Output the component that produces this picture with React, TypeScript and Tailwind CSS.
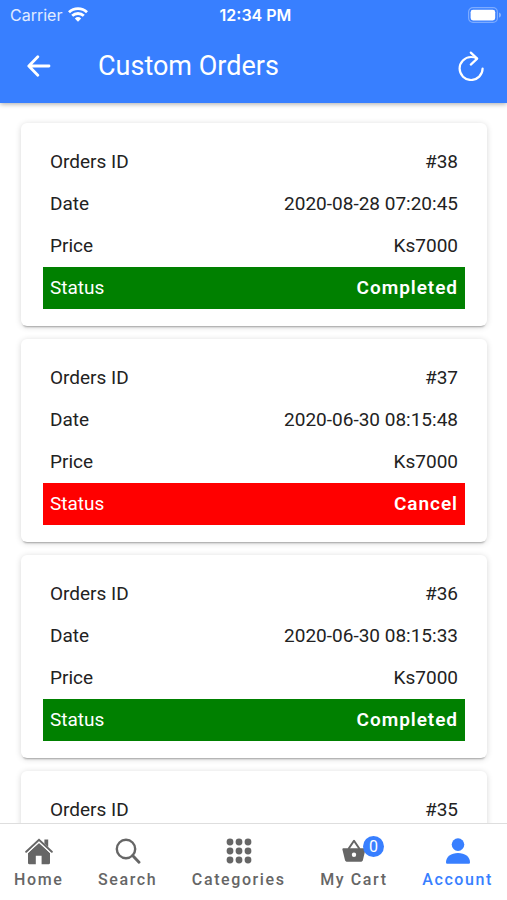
import type { ReactNode } from 'react';
import clsx from 'clsx';

type Order = {
  id: string;
  date?: string;
  price?: string;
  status?: 'Completed' | 'Cancel';
};

const orders: Order[] = [
  { id: '#38', date: '2020-08-28 07:20:45', price: 'Ks7000', status: 'Completed' },
  { id: '#37', date: '2020-06-30 08:15:48', price: 'Ks7000', status: 'Cancel' },
  { id: '#36', date: '2020-06-30 08:15:33', price: 'Ks7000', status: 'Completed' },
  { id: '#35' },
];

const WifiIcon = () => (
  <svg viewBox="0 0 20 15" className="h-[15px] w-5" fill="none" stroke="currentColor" strokeWidth="2.8" aria-hidden="true">
    <path d="M1 5.2a13 13 0 0 1 18 0" />
    <path d="M4.2 8.8a8.4 8.4 0 0 1 11.6 0" />
    <path d="M10 14.8 6.8 11.6a4.7 4.7 0 0 1 6.4 0z" fill="currentColor" stroke="none" />
  </svg>
);

const BatteryIcon = () => (
  <svg viewBox="0 0 33 16" className="h-4 w-[33px]" fill="none" aria-hidden="true">
    <rect x="0.6" y="0.6" width="28.8" height="14.8" rx="4.4" stroke="white" strokeOpacity="0.35" strokeWidth="1.2" />
    <rect x="2.6" y="2.8" width="24.6" height="10.6" rx="2.4" fill="white" />
    <path d="M31 5.4c1.4.5 2 1.4 2 2.6s-.6 2.1-2 2.6z" fill="white" fillOpacity="0.4" />
  </svg>
);

const BackIcon = () => (
  <svg viewBox="0 0 24 22" className="h-[22px] w-6" fill="none" stroke="currentColor" strokeWidth="2.8" strokeLinecap="round" strokeLinejoin="round" aria-hidden="true">
    <path d="M10.8 1.8 1.8 11l9 9.2M2.4 11h19.6" />
  </svg>
);

const RefreshIcon = () => (
  <svg viewBox="0 0 26 30" className="h-[30px] w-[26px]" fill="none" stroke="currentColor" strokeWidth="2.2" strokeLinecap="round" strokeLinejoin="round" aria-hidden="true">
    <path d="M18.6 7.4C17 6.3 15 6 13 6a11.5 11.5 0 1 0 11.6 11.5" />
    <path d="m12.8 1.6 6.4 6-6.4 6" />
  </svg>
);

const HomeIcon = () => (
  <svg viewBox="0 0 28 27" className="h-[27px] w-7" fill="currentColor" aria-hidden="true">
    <path d="M14 5 3 15v10c0 .7.5 1.2 1.2 1.2h6.6v-8.4h5.8v8.4h7.2c.7 0 1.2-.5 1.2-1.2V15z" />
    <path d="M19.4 1.6h3.8v7.6l-3.8-3.6z" />
    <path d="M1.2 13.8 14 1.8l12.8 12" fill="none" stroke="currentColor" strokeWidth="2" strokeLinecap="round" />
    <path d="M2.2 15.4 14 4.3l11.8 11.1" fill="none" stroke="white" strokeWidth="0.9" />
  </svg>
);

const SearchIcon = () => (
  <svg viewBox="0 0 26 26" className="size-[26px]" fill="none" stroke="currentColor" aria-hidden="true">
    <circle cx="11" cy="11" r="9.2" strokeWidth="2.4" />
    <path d="m17.6 17.6 6.4 6.6" strokeWidth="2.9" strokeLinecap="round" />
  </svg>
);

const AppsIcon = () => (
  <svg viewBox="0 0 26 26" className="size-[26px]" fill="currentColor" aria-hidden="true">
    {[4, 13, 22].map((cy) =>
      [4, 13, 22].map((cx) => <circle key={`${cx}-${cy}`} cx={cx} cy={cy} r="3.4" />),
    )}
  </svg>
);

const BasketIcon = () => (
  <svg viewBox="0 0 26 26" className="size-[26px]" fill="currentColor" aria-hidden="true">
    <path
      fillRule="evenodd"
      d="M2.4 10.2h21c.7 0 1.2.6 1 1.3l-2.4 10.2c-.3 1.4-1.2 2.1-2.6 2.1H6.5c-1.400 0-2.300-.7-2.600-2.100L1.400 11.500c-.2-.7.3-1.300 1-1.300zM13 14.600a2.200 2.200 0 1 0 0 4.400 2.200 2.200 0 0 0 0-4.400z"
    />
    <path d="m7.400 11 5.600-8.200L18.600 11" fill="none" stroke="currentColor" strokeWidth="2" strokeLinejoin="round" />
  </svg>
);

const PersonIcon = () => (
  <svg viewBox="0 0 26 26" className="size-[26px]" fill="currentColor" aria-hidden="true">
    <circle cx="13" cy="6.6" r="6.3" />
    <path d="M1 24.2C1 18.6 6.2 15 13 15s12 3.6 12 9.2c0 1-.6 1.6-1.5 1.6h-21C1.6 25.8 1 25.2 1 24.2z" />
  </svg>
);

const OrderRow = ({ label, children }: { label: string; children: ReactNode }) => (
  <div className="flex h-[42px] items-center justify-between px-[7px]">
    <dt>{label}</dt>
    <dd>{children}</dd>
  </div>
);

const OrderCard = ({ order }: { order: Order }) => (
  <li className="rounded-md bg-white px-[22px] pt-[18px] pb-[17px] shadow-[0_3px_2px_-2px_rgba(0,0,0,0.3),0_1px_6px_rgba(0,0,0,0.16)]">
    <dl className="text-[19px] leading-6 text-[#222222]">
      <OrderRow label="Orders ID">{order.id}</OrderRow>
      {order.date && <OrderRow label="Date">{order.date}</OrderRow>}
      {order.price && <OrderRow label="Price">{order.price}</OrderRow>}
      {order.status && (
        <div
          className={clsx(
            'flex h-[42px] items-center justify-between px-[7px] text-white',
            order.status === 'Completed' ? 'bg-[#008000]' : 'bg-[#ff0000]',
          )}
        >
          <dt>Status</dt>
          <dd className="font-semibold tracking-wider">{order.status}</dd>
        </div>
      )}
    </dl>
  </li>
);

const tabs = [
  { label: 'Home', icon: <HomeIcon /> },
  { label: 'Search', icon: <SearchIcon /> },
  { label: 'Categories', icon: <AppsIcon /> },
  { label: 'My Cart', icon: <BasketIcon />, badge: '0' },
  { label: 'Account', icon: <PersonIcon />, active: true },
];

export default function App() {
  return (
    <div className="flex h-screen flex-col overflow-hidden bg-white font-[Roboto,sans-serif]">
      <header className="relative z-10 bg-[#387fff] text-white shadow-[0_1px_5px_rgba(0,0,0,0.35)]">
        <div className="grid h-[29px] grid-cols-3 items-center pr-[6px] pl-[10px] font-[Inter,sans-serif] text-[16px] leading-5">
          <div className="flex items-center gap-[6px]">
            <span className="text-white/85">Carrier</span>
            <WifiIcon />
          </div>
          <span className="text-center font-semibold">12:34 PM</span>
          <div className="flex justify-end">
            <BatteryIcon />
          </div>
        </div>
        <div className="flex h-[74px] items-center pr-[23px] pl-[27px]">
          <button type="button" aria-label="Back">
            <BackIcon />
          </button>
          <h1 className="ml-[47px] flex-1 text-[27px] leading-8">Custom Orders</h1>
          <button type="button" aria-label="Refresh">
            <RefreshIcon />
          </button>
        </div>
      </header>

      <main className="min-h-0 flex-1 overflow-y-auto [scrollbar-width:none]">
        <ul className="flex flex-col gap-[13px] py-5 pr-5 pl-[21px]">
          {orders.map((order) => (
            <OrderCard key={order.id} order={order} />
          ))}
        </ul>
      </main>

      <nav className="flex justify-between border-t border-[#dedede] bg-white px-[14px] pt-[14px] pb-[10px]">
        {tabs.map((tab) => (
          <button
            key={tab.label}
            type="button"
            className={clsx(
              'flex flex-col items-center text-[16px] leading-5 font-medium tracking-widest',
              tab.active ? 'text-[#387fff]' : 'text-[#666666]',
            )}
          >
            <span className="relative flex h-8 items-start">
              {tab.icon}
              {tab.badge && (
                <span className="absolute -top-[2px] left-[22px] flex size-[21px] items-center justify-center rounded-full bg-[#387fff] text-[16px] font-normal tracking-normal text-white">
                  {tab.badge}
                </span>
              )}
            </span>
            {tab.label}
          </button>
        ))}
      </nav>
    </div>
  );
}
